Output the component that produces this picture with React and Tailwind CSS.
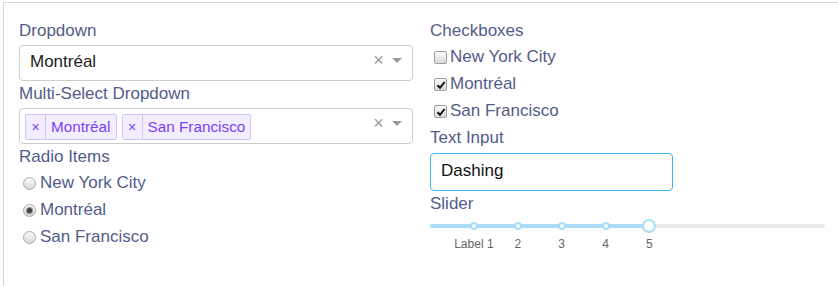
import React from 'react'

const font = "font-['Liberation_Sans',Arial,sans-serif]"

const Label = ({ children, className = '' }) => (
  <div className={`text-[17px] leading-[20px] text-[#525c8a] ${className}`}>{children}</div>
)

const Controls = () => (
  <div className="ml-auto flex h-full items-center pb-[6px] text-[#999]">
    <span className="w-[17px] text-center text-[18px] leading-none">×</span>
    <span className="flex w-[25px] justify-center pr-[5px]">
      <span className="h-0 w-0 border-x-[5px] border-t-[5px] border-x-transparent border-t-[#999]" />
    </span>
  </div>
)

const Tag = ({ children }) => (
  <div className="ml-[5px] mt-[5px] flex h-[26px] rounded-[2px] border border-[#d3c2ff] bg-[#f3eeff] text-[15.3px] leading-[24px] text-[#7a3ef8]">
    <span className="w-[20px] border-r border-[#d3c2ff] text-center text-[14px]">×</span>
    <span className="px-[5px]">{children}</span>
  </div>
)

const Radio = ({ label, checked }) => (
  <div className="flex h-[27px] items-start text-[17px] leading-[29px] text-[#525c8a]">
    <span className="ml-[4px] mr-[4px] mt-[9px] flex h-[13px] w-[13px] shrink-0 items-center justify-center rounded-full border border-[#aaa] bg-gradient-to-b from-[#fafafa] to-[#d9d9d9]">
      {checked && <span className="h-[5px] w-[5px] rounded-full bg-[#444] shadow-[0_0_1px_1px_#888]" />}
    </span>
    {label}
  </div>
)

const Checkbox = ({ label, checked }) => (
  <div className="flex h-[27px] items-start text-[17px] leading-[29px] text-[#525c8a]">
    <span className="ml-[4px] mr-[3px] mt-[9px] flex h-[13px] w-[13px] shrink-0 items-center justify-center rounded-[2px] border border-[#9d9d9d] bg-gradient-to-b from-[#fbfbfb] to-[#dadada]">
      {checked && (
        <svg width="10" height="10" viewBox="0 0 10 10">
          <path d="M1.5 5.2 L4 7.8 L8.6 2" fill="none" stroke="#111" strokeWidth="2" />
        </svg>
      )}
    </span>
    {label}
  </div>
)

const marks = [
  { v: 1, label: 'Label 1' },
  { v: 2, label: '2' },
  { v: 3, label: '3' },
  { v: 4, label: '4' },
  { v: 5, label: '5' },
]

const Slider = () => {
  const max = 9
  const value = 5
  return (
    <div className="relative mt-[5px] h-[40px] w-[395px]">
      <div className="absolute left-0 right-0 top-[5px] h-[4px] rounded-full bg-[#e9e9e9]" />
      <div className="absolute left-0 top-[5px] h-[4px] rounded-full bg-[#abdcf8]" style={{ width: `${(value / max) * 100}%` }} />
      {marks.slice(0, -1).map((m) => (
        <span
          key={m.v}
          className="absolute top-[3px] h-[8px] w-[8px] -translate-x-1/2 rounded-full border-2 border-[#abdcf8] bg-white"
          style={{ left: `${(m.v / max) * 100}%` }}
        />
      ))}
      <span
        className="absolute top-0 h-[14px] w-[14px] -translate-x-1/2 rounded-full border-2 border-[#abdcf8] bg-white"
        style={{ left: `${(value / max) * 100}%` }}
      />
      {marks.map((m) => (
        <span
          key={m.label}
          className="absolute top-[18px] -translate-x-1/2 whitespace-nowrap text-[12px] leading-[14px] text-[#666]"
          style={{ left: `${(m.v / max) * 100}%` }}
        >
          {m.label}
        </span>
      ))}
    </div>
  )
}

export default function App() {
  return (
    <div className={`h-[286px] w-[838px] overflow-hidden bg-white pl-[3px] pt-[2px] ${font}`}>
      <div className="flex h-full gap-[17px] border-l border-t border-[#d6d6d6] pl-[15px] pt-[18px]">
        {/* left column */}
        <div className="w-[394px]">
          <Label>Dropdown</Label>
          <div className="mt-[4px] flex h-[36px] items-start rounded-[4px] border border-[#ccc] pl-[10px]">
            <span className="text-[17px] leading-[31px] text-[#222]">Montréal</span>
            <Controls />
          </div>

          <Label className="mt-[3px]">Multi-Select Dropdown</Label>
          <div className="mt-[4px] flex h-[36px] items-start rounded-[4px] border border-[#ccc]">
            <Tag>Montréal</Tag>
            <Tag>San Francisco</Tag>
            <Controls />
          </div>

          <Label className="mt-[3px]">Radio Items</Label>
          <div className="mt-[1px]">
            <Radio label="New York City" />
            <Radio label="Montréal" checked />
            <Radio label="San Francisco" />
          </div>
        </div>

        {/* right column */}
        <div className="w-[395px]">
          <Label>Checkboxes</Label>
          <div className="mt-[1px]">
            <Checkbox label="New York City" />
            <Checkbox label="Montréal" checked />
            <Checkbox label="San Francisco" checked />
          </div>

          <Label className="mt-[5px]">Text Input</Label>
          <input
            readOnly
            value="Dashing"
            className="mt-[5px] block h-[38px] w-[243px] rounded-[4px] border border-[#45b3f0] px-[10px] pb-[2px] text-[17px] text-[#111] outline-none"
          />

          <Label className="mt-[3px]">Slider</Label>
          <Slider />
        </div>
      </div>
    </div>
  )
}
